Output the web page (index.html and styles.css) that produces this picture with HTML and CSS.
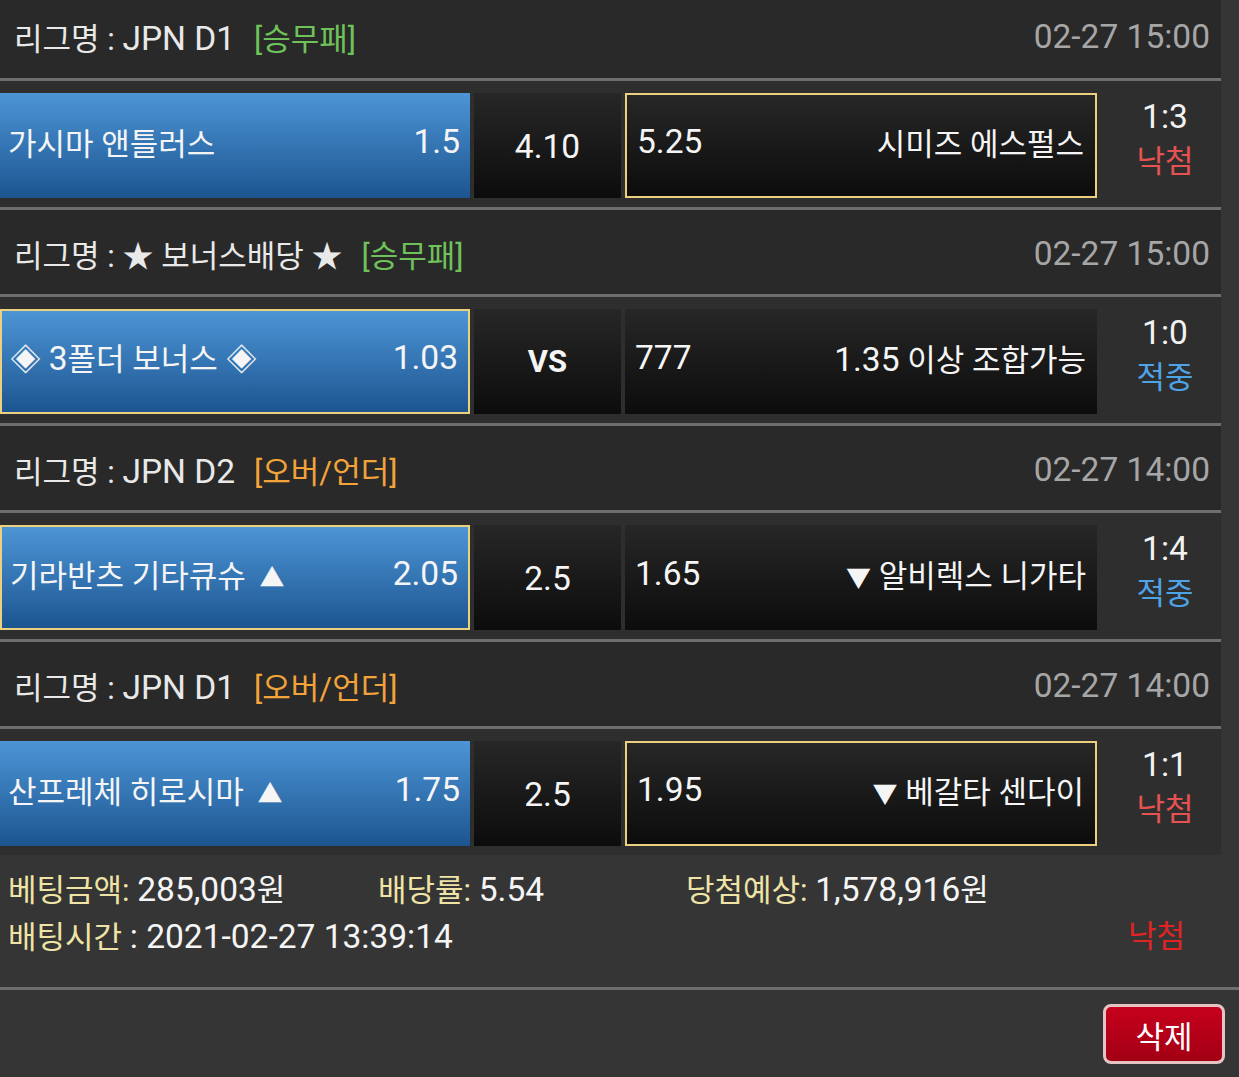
FILE: index.html
```html
<!DOCTYPE html>
<html lang="ko">
<head>
    <meta charset="UTF-8">
    <meta name="viewport" content="width=device-width, initial-scale=1.0">
    <title>배팅내역</title>
    <link rel="stylesheet" href="styles.css">
</head>
<body>
    <div class="slip">
        <div class="games">
            <div class="game">
                <div class="league">
                    <span class="league-name">리그명 : <span class="num">JPN D1</span></span>
                    <span class="bet-type type-wdl">[승무패]</span>
                    <span class="kickoff num">02-27 15:00</span>
                </div>
                <div class="bet-row">
                    <div class="pick pick-home">
                        <span>가시마 앤틀러스</span>
                        <span class="num">1.5</span>
                    </div>
                    <div class="pick pick-draw num">4.10</div>
                    <div class="pick pick-away selected">
                        <span class="num">5.25</span>
                        <span>시미즈 에스펄스</span>
                    </div>
                    <div class="result">
                        <span class="score num">1:3</span>
                        <span class="lose">낙첨</span>
                    </div>
                </div>
            </div>

            <div class="game">
                <div class="league">
                    <span class="league-name">리그명 : ★ 보너스배당 ★</span>
                    <span class="bet-type type-wdl">[승무패]</span>
                    <span class="kickoff num">02-27 15:00</span>
                </div>
                <div class="bet-row">
                    <div class="pick pick-home selected">
                        <span>◈ <span class="num">3</span>폴더 보너스 ◈</span>
                        <span class="num">1.03</span>
                    </div>
                    <div class="pick pick-draw vs">VS</div>
                    <div class="pick pick-away">
                        <span class="num">777</span>
                        <span><span class="num">1.35</span> 이상 조합가능</span>
                    </div>
                    <div class="result">
                        <span class="score num">1:0</span>
                        <span class="win">적중</span>
                    </div>
                </div>
            </div>

            <div class="game">
                <div class="league">
                    <span class="league-name">리그명 : <span class="num">JPN D2</span></span>
                    <span class="bet-type type-ou">[오버/언더]</span>
                    <span class="kickoff num">02-27 14:00</span>
                </div>
                <div class="bet-row">
                    <div class="pick pick-home selected">
                        <span>기라반츠 기타큐슈 <span class="arrow">▲</span></span>
                        <span class="num">2.05</span>
                    </div>
                    <div class="pick pick-draw num">2.5</div>
                    <div class="pick pick-away">
                        <span class="num">1.65</span>
                        <span><span class="arrow">▼</span> 알비렉스 니가타</span>
                    </div>
                    <div class="result">
                        <span class="score num">1:4</span>
                        <span class="win">적중</span>
                    </div>
                </div>
            </div>

            <div class="game">
                <div class="league">
                    <span class="league-name">리그명 : <span class="num">JPN D1</span></span>
                    <span class="bet-type type-ou">[오버/언더]</span>
                    <span class="kickoff num">02-27 14:00</span>
                </div>
                <div class="bet-row">
                    <div class="pick pick-home">
                        <span>산프레체 히로시마 <span class="arrow">▲</span></span>
                        <span class="num">1.75</span>
                    </div>
                    <div class="pick pick-draw num">2.5</div>
                    <div class="pick pick-away selected">
                        <span class="num">1.95</span>
                        <span><span class="arrow">▼</span> 베갈타 센다이</span>
                    </div>
                    <div class="result">
                        <span class="score num">1:1</span>
                        <span class="lose">낙첨</span>
                    </div>
                </div>
            </div>
        </div>

        <div class="summary">
            <div class="summary-top">
                <span><em>베팅금액:</em> <span class="num">285,003</span>원</span>
                <span><em>배당률:</em> <span class="num">5.54</span></span>
                <span><em>당첨예상:</em> <span class="num">1,578,916</span>원</span>
            </div>
            <div class="summary-bottom">
                <span><em>배팅시간</em> <span class="num">: 2021-02-27 13:39:14</span></span>
                <span class="summary-status">낙첨</span>
            </div>
        </div>

        <div class="actions">
            <button class="delete-btn">삭제</button>
        </div>
    </div>
</body>
</html>
```

FILE: styles.css
```css
  body {
      margin: 0;
      padding: 0;
      background-color: #353535;
      font-family: Roboto, "Noto Sans CJK KR", sans-serif;
      font-size: 31px;
      color: #f2f2f2;
  }
  .num {
      font-size: 33.5px;
  }
  .arrow {
      font-size: 25px;
  }
  .pick-home .arrow {
      margin-left: 6px;
  }
  .games {
      width: 1221px;
  }
  .league {
      display: flex;
      align-items: center;
      height: 74px;
      padding: 6px 11px 4px 14px;
      background-color: #292929;
      border-bottom: 3px solid #6e6e6e;
  }
  .game:first-child .league {
      height: 72px;
      padding-top: 0;
      padding-bottom: 6px;
  }
  .league-name {
      color: #e9e9e9;
  }
  .bet-type {
      margin-left: 19px;
  }
  .type-wdl {
      color: #6fc25a;
  }
  .type-ou {
      color: #f2a33a;
  }
  .kickoff {
      margin-left: auto;
      color: #a6a6a6;
  }
  .bet-row {
      display: flex;
      gap: 4px;
      height: 105px;
      padding: 12px 0 9px;
      background-color: #2e2e2e;
      border-bottom: 3px solid #6e6e6e;
  }
  .game:last-child .bet-row {
      border-bottom: none;
  }
  .pick {
      box-sizing: border-box;
      height: 105px;
      display: flex;
      align-items: center;
      justify-content: space-between;
      padding-bottom: 9px;
      color: #f5f5f5;
      background: linear-gradient(#272727, #0c0c0c);
  }
  .pick-home {
      width: 470px;
      padding-left: 8px;
      padding-right: 10px;
      background: linear-gradient(#4d95d6, #1c5590);
  }
  .pick-draw {
      width: 147px;
      justify-content: center;
      padding-bottom: 0;
      padding-top: 2px;
  }
  .pick-draw.vs {
      font-weight: bold;
      padding-top: 0;
  }
  .pick-away {
      width: 472px;
      padding-left: 10px;
      padding-right: 11px;
  }
  .selected {
      border: 2px solid #ead07f;
  }
  .result {
      flex: 1;
      display: flex;
      flex-direction: column;
      align-items: center;
      justify-content: center;
      padding: 0 0 14px 8px;
      line-height: 45px;
  }
  .score {
      color: #f2f2f2;
  }
  .lose {
      color: #e55252;
  }
  .win {
      color: #4ea3e6;
  }
  .summary {
      padding: 12px 54px 26px 8px;
      border-bottom: 3px solid #6e6e6e;
      line-height: 46px;
      color: #f5f5f5;
  }
  .summary em {
      font-style: normal;
      color: #efe4a6;
  }
  .summary-top {
      display: grid;
      grid-template-columns: 370px 308px auto;
  }
  .summary-bottom {
      display: flex;
      justify-content: space-between;
  }
  .summary-status {
      color: #e02424;
  }
  .actions {
      display: flex;
      justify-content: flex-end;
      padding: 14px 14px 0;
  }
  .delete-btn {
      width: 122px;
      height: 60px;
      font-family: inherit;
      font-size: 31px;
      color: #fff;
      background: linear-gradient(#c6001d, #a30014);
      border: 3px solid #e6c4c4;
      border-radius: 8px;
      cursor: pointer;
  }
```
